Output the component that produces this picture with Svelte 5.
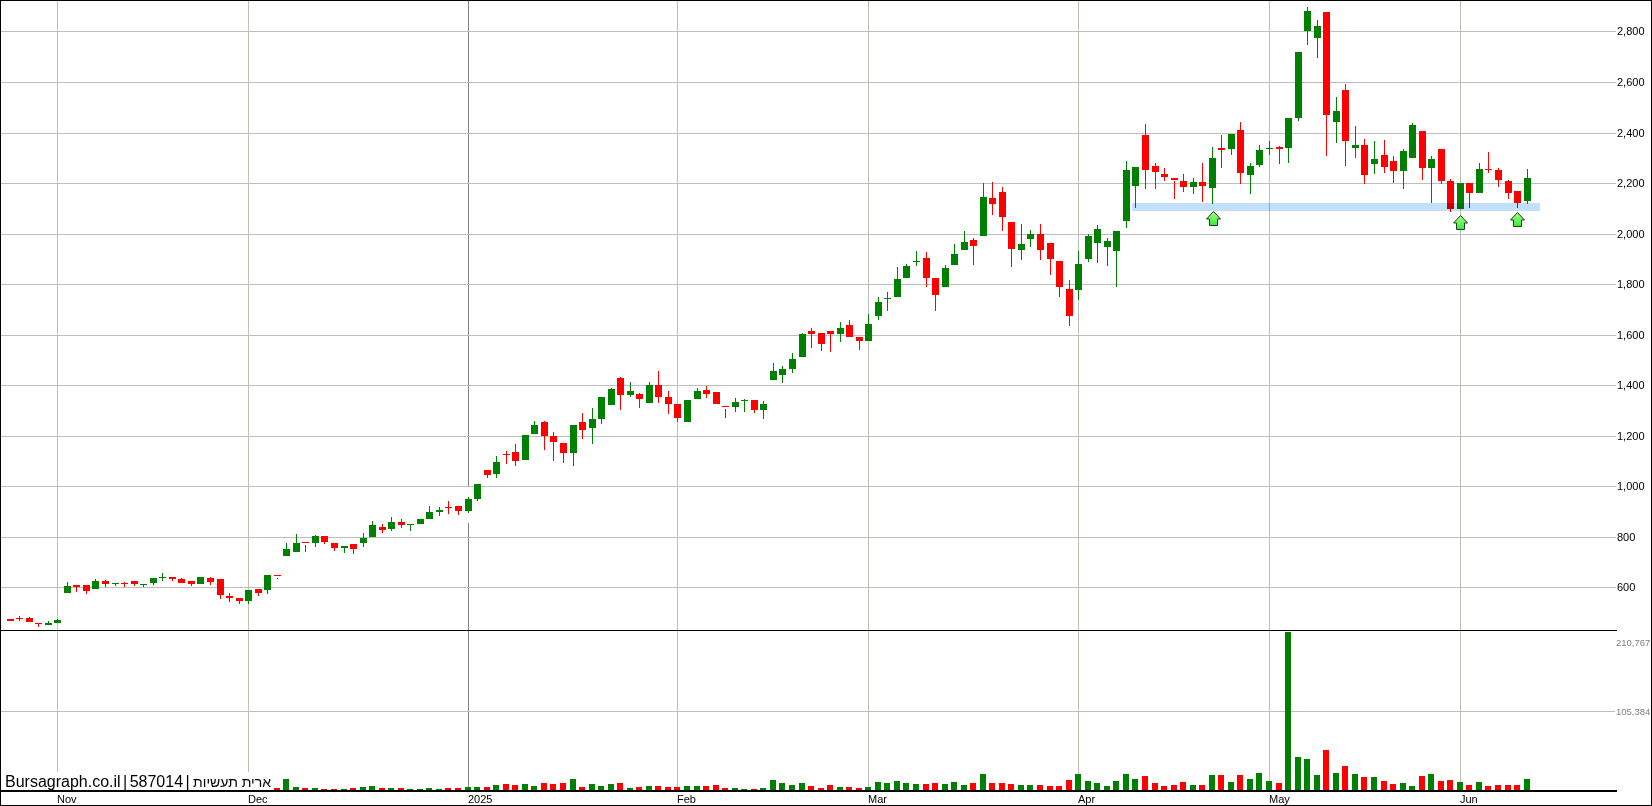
<script>
	// y positions are screen pixels: [colour, wickTop, wickBottom, bodyTop, bodyBottom, volume]
	const candles = [
		['r',619,621,619,621,0],['r',616,621,618,619,0],['r',617,622,618,622,0],['r',623,627,623,624,0],
		['g',621,625,623,625,0],['g',619,623,620,623,0],['g',582,593,586,593,0],['r',585,592,585,587,0],
		['r',585,594,585,591,0],['g',579,589,581,589,0],['r',580,587,581,584,0],['g',583,586,583,584,0],
		['r',582,587,583,584,0],['r',581,586,581,584,0],['g',584,587,584,585,0],['g',578,585,578,583,0],
		['g',573,581,577,578,0],['r',577,581,577,579,0],['r',578,583,579,583,0],['r',581,586,581,584,0],
		['g',577,584,577,584,0],['r',577,585,578,582,0],['r',579,599,579,595,0],['r',593,602,596,598,0],
		['r',598,604,598,601,0],['g',590,604,590,601,0],['r',589,596,589,593,0],['g',575,594,575,590,0],
		['r',578,579,575,576,2],['g',543,556,549,556,11],['g',534,552,543,552,3],['r',545,552,542,543,2],
		['g',535,547,536,543,2],['r',536,544,536,542,1],['r',543,551,543,548,1],['g',546,553,546,548,1],
		['r',544,554,544,549,2],['g',533,547,538,543,3],['g',521,537,525,537,4],['r',524,533,527,530,2],
		['g',517,531,522,529,2],['r',519,528,522,525,2],['g',524,531,524,525,1],['g',519,524,519,524,1],
		['g',506,519,512,519,2],['g',507,516,510,512,1],['r',501,514,507,508,2],['r',506,515,506,511,2],
		['g',497,513,499,511,3],['g',484,501,484,499,3],['r',470,478,470,475,3],['g',456,478,462,474,5],
		['r',451,464,454,455,6],['r',444,466,452,461,5],['g',435,460,435,460,6],['g',421,434,425,434,4],
		['r',421,450,422,436,7],['r',432,461,436,442,6],['r',443,463,443,453,7],['g',425,466,425,453,11],
		['r',413,439,422,430,3],['g',408,444,419,428,6],['g',397,424,397,419,4],['g',388,405,389,405,6],
		['r',377,410,378,395,7],['g',382,397,391,395,2],['r',393,408,394,399,3],['g',382,403,385,403,4],
		['r',371,403,385,397,4],['r',391,414,397,404,3],['r',404,422,404,418,3],['g',400,422,400,422,4],
		['g',388,399,391,399,4],['r',386,398,390,394,4],['r',392,404,392,404,5],['r',409,418,406,407,2],
		['g',398,412,402,407,2],['g',399,412,400,401,1],['r',400,413,400,410,1],['g',401,419,404,410,2],
		['g',363,380,371,380,10],['g',366,383,369,375,7],['g',353,373,359,369,5],['g',333,357,334,357,7],
		['r',328,348,331,334,4],['r',333,351,333,344,2],['r',331,352,331,334,5],['g',322,342,328,334,3],
		['r',320,337,325,337,3],['r',337,350,337,341,2],['g',314,341,324,341,3],['g',297,320,302,316,8],
		['g',292,311,298,299,7],['g',267,297,279,297,9],['g',264,278,266,278,7],['g',251,266,261,262,6],
		['r',252,287,258,278,6],['r',278,311,278,295,7],['g',265,287,268,287,6],['g',244,265,254,265,8],
		['g',231,250,242,250,5],['r',238,265,240,246,7],['g',183,236,197,236,16],['r',182,215,198,204,7],
		['r',187,231,192,217,7],['r',222,267,222,249,6],['g',224,260,244,250,5],['g',230,247,234,239,5],
		['r',224,260,234,250,5],['r',243,275,243,259,4],['r',261,297,261,287,4],['r',280,326,289,316,10],
		['g',251,300,264,290,16],['g',234,262,236,259,9],['g',225,263,229,243,7],['g',238,266,241,247,4],
		['g',231,287,231,251,9],['g',161,228,170,221,16],['g',167,208,167,186,11],['r',124,189,135,170,14],
		['r',163,189,166,172,7],['r',168,181,174,177,4],['r',181,199,178,180,5],['r',174,192,181,187,8],
		['g',178,194,182,187,5],['r',163,202,182,186,5],['g',147,204,158,188,15],['r',135,168,148,150,15],
		['g',134,155,134,149,8],['r',122,184,130,173,15],['g',163,194,166,175,11],['g',145,167,150,165,17],
		['g',141,155,148,149,9],['r',146,164,147,149,7],['g',118,163,118,148,158],['g',52,121,52,118,33],
		['g',7,45,11,31,31],['g',20,58,26,38,15],['r',12,156,12,115,40],['g',97,143,111,122,17],
		['r',84,166,90,141,24],['g',126,158,145,148,16],['r',139,184,145,175,13],['g',141,174,159,164,13],
		['r',140,173,155,167,9],['r',156,183,161,171,6],['g',149,189,151,171,7],['g',123,158,125,158,4],
		['r',131,180,131,168,14],['g',156,203,159,168,16],['r',149,184,149,181,9],['r',179,212,181,209,10],
		['g',183,209,183,209,8],['r',183,208,183,193,5],['g',163,193,169,193,8],['r',152,173,169,170,4],
		['r',168,187,170,180,5],['r',180,199,181,193,5],['r',191,208,191,203,5],['g',169,204,178,201,11]
	].map(([colour, wickTop, wickBottom, bodyTop, bodyBottom, volume], i) => ({
		colour: colour === 'g' ? 'up' : 'down',
		col: Math.floor(10.1 + 9.541 * i),
		wickTop, wickBottom, bodyTop, bodyBottom, volume
	}))

	const prices = [
		['2,800',31],['2,600',82],['2,400',133],['2,200',183],['2,000',234],['1,800',284],
		['1,600',335],['1,400',385],['1,200',436],['1,000',486],['800',537],['600',587]
	]
	const months = [['Nov',57],['Dec',248],['Feb',677],['Mar',868],['Apr',1078],['May',1269],['Jun',1460]]
	const signals = [[1213,211],[1460,215],[1517,212]]
</script>

<main class="page">
	<svg class="chart" viewBox="0 0 1652 806" width="1652" height="806" shape-rendering="crispEdges">
		<defs>
			<linearGradient id="arrowFill" x1="0" y1="0" x2="0" y2="1">
				<stop offset="0" stop-color="#a4ff84"/>
				<stop offset="1" stop-color="#38ea38"/>
			</linearGradient>
		</defs>

		{#each months as [, x]}
			<rect class="grid-v" {x} y="1" width="1" height="789"/>
		{/each}
		<rect class="grid-year" x="468" y="1" width="1" height="486"/>
		<rect class="grid-year" x="468" y="523" width="1" height="267"/>

		{#each prices as [, y]}
			<rect class="grid-h" x="1" {y} width="1615" height="1"/>
		{/each}
		<rect class="grid-h" x="1" y="711" width="1614" height="1"/>

		<rect class="axis" x="1" y="630" width="1616" height="1"/>

		{#each candles as c}
			{#if c.volume}
				<rect class={c.colour} x={c.col - 3} y={790 - c.volume} width="6" height={c.volume}/>
			{/if}
		{/each}
		<rect class="axis" x="1" y="790" width="1616" height="2"/>

		{#each candles as c}
			<rect class={c.colour} x={c.col} y={c.wickTop} width="1" height={c.wickBottom - c.wickTop}/>
			<rect class={c.colour} x={c.col - 3} y={c.bodyTop} width="7" height={c.bodyBottom - c.bodyTop}/>
		{/each}

		<rect class="band" x="1132" y="203" width="408" height="8"/>

		{#each signals as [x, y]}
			<path
				class="signal"
				shape-rendering="auto"
				d="M{x + 0.5} {y + 0.5}l7 7.5h-3v6.5h-8v-6.5h-3z"
				fill="url(#arrowFill)"
			/>
		{/each}

		<rect x="1" y="772" width="272" height="18" fill="#fff"/>
		<text class="title" x="5" y="787">Bursagraph.co.il | 587014 | <tspan class="title-name" dx="1">ארית תעשיות</tspan></text>

		{#each prices as [label, y]}
			<text class="price" x="1617" y={y + 4}>{label}</text>
		{/each}
		<text class="vol" x="1616" y="646">210,767</text>
		<text class="vol" x="1616" y="715">105,384</text>

		{#each months as [label, x]}
			<text class="month" {x} y="803">{label}</text>
		{/each}
		<text class="month" x="468" y="803">2025</text>
	</svg>
</main>

<style>
	:global(body) {
		margin: 0;
		background: #fff;
		overflow: hidden;
	}
	.page {
		width: 1652px;
		height: 806px;
	}
	.chart {
		display: block;
		background: #fff;
		outline: 1px solid #000;
		outline-offset: -1px;
	}
	.grid-v {
		fill: #c0bdb5;
	}
	.grid-year {
		fill: #808080;
	}
	.grid-h {
		fill: #bebebe;
	}
	.axis {
		fill: #000;
	}
	.up {
		fill: #008000;
	}
	.down {
		fill: #ff0000;
	}
	.band {
		fill: #c2dffc;
		mix-blend-mode: multiply;
	}
	.signal {
		stroke: #1f3d1f;
		stroke-width: 1;
	}
	text {
		font-family: "Liberation Sans", Arial, sans-serif;
	}
	.title {
		font-size: 16px;
		word-spacing: -2px;
		fill: #000;
	}
	.title-name {
		font-size: 14px;
		word-spacing: 0;
	}
	.price,
	.month {
		font-size: 11px;
		fill: #000;
	}
	.vol {
		font-size: 9.5px;
		fill: #808080;
	}
</style>
